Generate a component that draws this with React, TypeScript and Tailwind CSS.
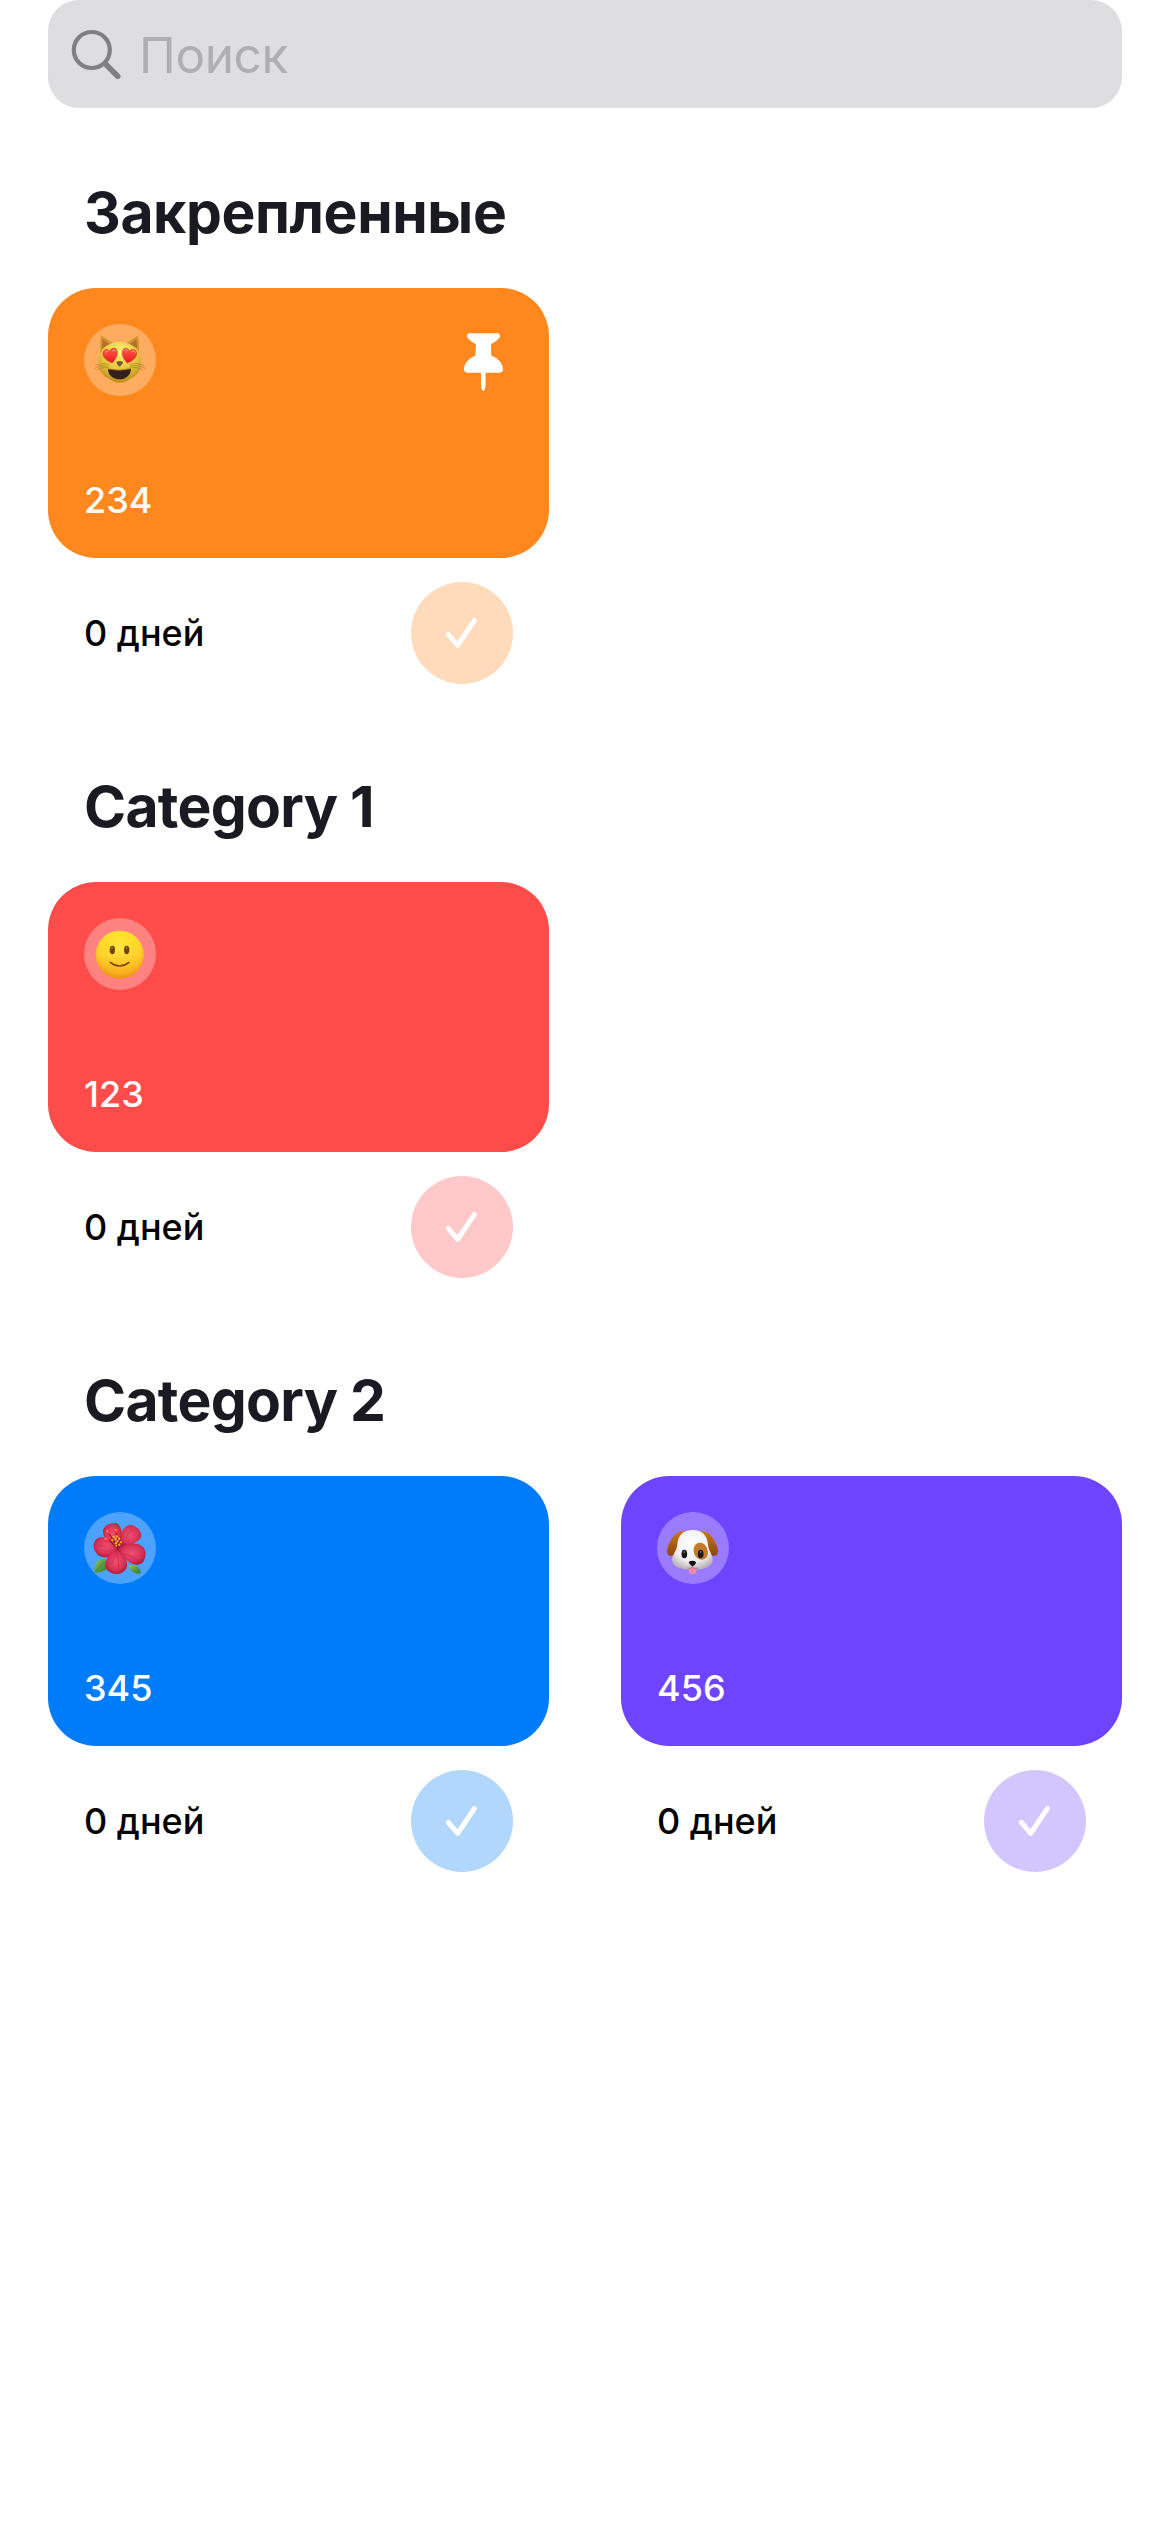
import type { ReactNode } from "react";

function CatEmoji() {
  return (
    <svg viewBox="30 30 216 216" className="size-full">
      <defs>
        <radialGradient id="catFace" cx="0.5" cy="0.25" r="0.8">
          <stop offset="0" stopColor="#fdf27a" />
          <stop offset="0.5" stopColor="#e9c840" />
          <stop offset="1" stopColor="#b88313" />
        </radialGradient>
        <linearGradient id="heart" x1="0" y1="0" x2="0" y2="1">
          <stop offset="0" stopColor="#ff5a4a" />
          <stop offset="1" stopColor="#ee1720" />
        </linearGradient>
      </defs>
      <path d="M80 116 C78 95 79 78 81 67 Q83 64 88 69 L117 88 Z" fill="#cf9330" />
      <path d="M194 116 C196 95 194 78 192 67 Q190 64 186 69 L157 88 Z" fill="#cf9330" />
      <path d="M84 102 L86 76 L107 91 Z M190 102 L187 76 L167 91 Z" fill="#b37028" />
      <path d="M137 84 C175 84 202 110 202 147 C202 176 180 190 160 200 Q137 213 114 200 C94 190 73 176 73 147 C73 110 99 84 137 84Z" fill="url(#catFace)" />
      <g fill="none" stroke="#8b6420" strokeWidth="1.6" opacity="0.75">
        <path d="M106 151 Q84 145 64 154 M104 156 Q80 151 62 163 M105 161 Q84 157 68 168" />
        <path d="M166 151 Q190 145 210 154 M168 156 Q194 151 214 163 M167 161 Q190 157 206 168" />
      </g>
      <path d="M114 147 C101 141 86 132 87 118 C88 106 101 102 107 112 C113 98 129 100 130 113 C131 128 121 140 114 147Z" fill="url(#heart)" stroke="#c92a16" strokeWidth="1.5" />
      <path d="M160 147 C154 140 143 128 145 113 C147 100 162 99 167 112 C173 102 188 106 188 118 C188 133 173 142 160 147Z" fill="url(#heart)" stroke="#c92a16" strokeWidth="1.5" />
      <path d="M94 115 Q96 109 102 111 M115 111 Q120 104 126 110 M150 110 Q156 103 161 110 M174 112 Q180 108 184 115" stroke="#ff9c92" strokeWidth="3" fill="none" strokeLinecap="round" />
      <path d="M127 145 Q137 137 147 144 Q147 152 137 158 Q128 153 127 145Z" fill="#7a5a35" />
      <path d="M102 165 Q136 173 171 164 C171 184 154 196 137 196 C118 196 102 184 102 165Z" fill="#33201c" />
      <path d="M102 165 Q136 173 171 164" stroke="#8b6215" strokeWidth="2" fill="none" />
    </svg>
  );
}

function SmileEmoji() {
  return (
    <svg viewBox="30 30 216 216" className="size-full">
      <defs>
        <linearGradient id="smileFace" x1="0" y1="0" x2="0" y2="1">
          <stop offset="0" stopColor="#ffe22c" />
          <stop offset="0.5" stopColor="#ffd02b" />
          <stop offset="1" stopColor="#f6a31c" />
        </linearGradient>
        <radialGradient id="smileEdge" cx="0.5" cy="0.38" r="0.62">
          <stop offset="0" stopColor="#fff350" stopOpacity="0.55" />
          <stop offset="0.6" stopColor="#ffdb30" stopOpacity="0.15" />
          <stop offset="1" stopColor="#e88a0c" stopOpacity="0.75" />
        </radialGradient>
      </defs>
      <circle cx="137" cy="140" r="72" fill="url(#smileFace)" />
      <circle cx="137" cy="140" r="72" fill="url(#smileEdge)" />
      <ellipse cx="115" cy="126" rx="8" ry="12.5" fill="#70430c" />
      <ellipse cx="158" cy="126" rx="8" ry="12.5" fill="#70430c" />
      <ellipse cx="114" cy="120" rx="3" ry="3" fill="#a97827" />
      <ellipse cx="157" cy="120" rx="3" ry="3" fill="#a97827" />
      <path d="M109 163 Q136 185 165 163" stroke="#7c4508" strokeWidth="4.5" strokeLinecap="round" fill="none" />
    </svg>
  );
}

function FlowerEmoji() {
  return (
    <svg viewBox="30 30 216 216" className="size-full">
      <defs>
        <radialGradient id="petal" cx="0.5" cy="0.45" r="0.62">
          <stop offset="0" stopColor="#ef5070" />
          <stop offset="0.6" stopColor="#d93256" />
          <stop offset="1" stopColor="#a01535" />
        </radialGradient>
        <linearGradient id="leaf" x1="0" y1="0" x2="1" y2="1">
          <stop offset="0" stopColor="#8cc860" />
          <stop offset="1" stopColor="#33742b" />
        </linearGradient>
      </defs>
      <path d="M93 169 C70 168 60 188 61 213 C77 211 95 210 101 196Z" fill="url(#leaf)" />
      <path d="M62 212 L90 178" stroke="#3b7a2c" strokeWidth="2" />
      <path d="M163 190 C177 188 196 184 201 214 C184 217 168 211 163 190Z" fill="url(#leaf)" />
      <path d="M110 110 L150 95 L170 140 L140 165 L108 155Z" fill="#a81c3c" />
      <path d="M134 126 C136 95 150 69 170 69 C182 70 203 84 202 101 C200 118 171 129 137 137Z" fill="url(#petal)" />
      <path d="M130 133 C105 128 86 107 87 85 C91 70 111 60 128 64 C145 72 148 103 134 135Z" fill="url(#petal)" />
      <path d="M132 146 C112 170 78 172 66 152 C51 132 61 110 79 106 C99 102 124 120 132 142Z" fill="url(#petal)" />
      <path d="M132 137 C151 124 188 119 203 132 C219 143 217 166 207 181 C187 199 153 181 132 141Z" fill="url(#petal)" />
      <path d="M130 147 C113 147 96 165 94 188 C94 207 113 216 129 216 C148 215 164 199 158 179 C155 162 144 147 130 147Z" fill="url(#petal)" />
      <path d="M113 188 Q121 166 128 155 M134 195 Q134 169 129 155 M151 155 Q175 163 191 174 M99 135 Q82 128 73 130 M154 109 Q166 91 175 83" stroke="#b31c43" strokeWidth="2" fill="none" opacity="0.6" />
      <path d="M134 143 Q121 132 107 114 M132 139 Q120 113 104 95 M132 137 Q131 109 127 88" stroke="#96182d" strokeWidth="4" fill="none" />
      <g fill="#ec3545">
        <circle cx="102" cy="90" r="8" />
        <circle cx="127" cy="86" r="8" />
        <circle cx="97" cy="112" r="8" />
      </g>
      <g fill="#ff8f93">
        <circle cx="100" cy="88" r="3" />
        <circle cx="125" cy="84" r="3" />
        <circle cx="95" cy="110" r="3" />
      </g>
      <g fill="#ffc414">
        <circle cx="119" cy="105" r="3.4" />
        <circle cx="129" cy="103" r="3.4" />
        <circle cx="115" cy="115" r="3" />
        <circle cx="125" cy="111" r="3.4" />
        <circle cx="135" cy="110" r="3.4" />
        <circle cx="130" cy="118" r="3.4" />
        <circle cx="141" cy="121" r="3" />
        <circle cx="126" cy="124" r="3.4" />
        <circle cx="136" cy="128" r="3.4" />
        <circle cx="127" cy="131" r="3" />
      </g>
    </svg>
  );
}

function DogEmoji() {
  return (
    <svg viewBox="27 30 216 216" className="size-full">
      <defs>
        <radialGradient id="dogFace" cx="0.5" cy="0.35" r="0.68">
          <stop offset="0" stopColor="#ffffff" />
          <stop offset="0.65" stopColor="#f0eff0" />
          <stop offset="1" stopColor="#b6adb5" />
        </radialGradient>
        <linearGradient id="dogEar" x1="0" y1="0" x2="0" y2="1">
          <stop offset="0" stopColor="#c9781c" />
          <stop offset="1" stopColor="#8d4606" />
        </linearGradient>
      </defs>
      <path d="M109 87 C84 87 65 109 57 145 C56 158 64 165 76 160 L100 147Z" fill="url(#dogEar)" />
      <path d="M158 87 C183 87 202 109 210 145 C211 158 203 165 191 160 L166 147Z" fill="url(#dogEar)" />
      <path d="M134 84 C163 84 179 102 180 128 C181 145 195 158 194 174 C193 197 164 203 134 203 C104 203 73 197 72 174 C72 158 87 145 88 128 C89 102 105 84 134 84Z" fill="url(#dogFace)" />
      <path d="M157 122 C171 123 179 137 180 151 C180 168 168 176 155 172 C142 167 136 156 137 142 C138 130 145 122 157 122Z" fill="#c57b25" />
      <ellipse cx="109" cy="156" rx="8.5" ry="13" fill="#191514" />
      <ellipse cx="158" cy="156" rx="8.5" ry="13" fill="#191514" />
      <circle cx="109" cy="150" r="3" fill="#777" />
      <circle cx="158" cy="150" r="3" fill="#777" />
      <path d="M123 199 Q134 194 145 199 V206 Q144 216 134 216 Q123 215 123 206Z" fill="#ff8ba8" />
      <path d="M134 199 V208" stroke="#d95c7e" strokeWidth="2" />
      <path d="M133 190 V196 M118 198 Q128 202 133 195 Q140 202 150 198" stroke="#8a7b80" strokeWidth="2.5" fill="none" />
      <path d="M122 180 Q133 172 144 180 Q144 188 133 193 Q123 188 122 180Z" fill="#171315" />
    </svg>
  );
}

function PinIcon() {
  return (
    <svg viewBox="72 68 117 176" className="h-[58.7px] w-[39px]" fill="#fff">
      <path d="M88 69 H172 Q180 69 180 78 C180 86 164 95 153 102 L154 136 C176 143 189 161 189 177 Q189 187 179 187 H137 V222 Q136 239 130 243 Q124 239 123 222 V187 H82 Q72 187 72 177 C72 161 85 143 106 136 L108 102 C97 95 81 86 81 78 Q81 69 88 69Z" />
    </svg>
  );
}

function SearchIcon() {
  return (
    <svg viewBox="0 0 50 50" className="size-[50px] shrink-0" fill="none" stroke="#808084" strokeLinecap="round">
      <circle cx="20.8" cy="21" r="18" strokeWidth="4.2" />
      <path d="M34 34.5 L46.7 47.2" strokeWidth="5.6" />
    </svg>
  );
}

type Tracker = {
  name: string;
  emoji: ReactNode;
  card: string;
  button: string;
  pinned?: boolean;
};

const sections: { title: string; tracking: string; trackers: Tracker[] }[] = [
  {
    title: "Закрепленные",
    tracking: "tracking-[-0.4px]",
    trackers: [{ name: "234", emoji: <CatEmoji />, card: "bg-[#ff881e]", button: "bg-[#ffdbbb]", pinned: true }],
  },
  {
    title: "Category 1",
    tracking: "tracking-[-0.7px]",
    trackers: [{ name: "123", emoji: <SmileEmoji />, card: "bg-[#fd4c49]", button: "bg-[#fec9c8]" }],
  },
  {
    title: "Category 2",
    tracking: "tracking-[-0.7px]",
    trackers: [
      { name: "345", emoji: <FlowerEmoji />, card: "bg-[#007bfa]", button: "bg-[#b2d7fd]" },
      { name: "456", emoji: <DogEmoji />, card: "bg-[#6e44fe]", button: "bg-[#d3c6ff]" },
    ],
  },
];

function TrackerCell({ tracker }: { tracker: Tracker }) {
  return (
    <article>
      <div className={`flex h-[270px] flex-col justify-between rounded-[48px] px-9 pt-9 pb-[36px] ${tracker.card}`}>
        <div className="flex justify-between">
          <div className="size-[72px] rounded-full bg-white/30">{tracker.emoji}</div>
          {tracker.pinned && (
            <div className="mt-[8.5px] mr-[10px]">
              <PinIcon />
            </div>
          )}
        </div>
        <p className="text-[36px] leading-[44px] font-medium text-white">{tracker.name}</p>
      </div>
      <div className="mt-6 flex h-[102px] items-center justify-between px-9">
        <span className="text-[36px] leading-[44px] font-medium text-black">0 дней</span>
        <button className={`flex size-[102px] items-center justify-center rounded-full ${tracker.button}`}>
          <svg viewBox="0 0 102 102" className="size-full" fill="none" stroke="#fff" strokeWidth="5" strokeLinecap="round" strokeLinejoin="round">
            <path d="M37.3 52.3 L46.7 63.3 L63.3 38.6" />
          </svg>
        </button>
      </div>
    </article>
  );
}

export default function App() {
  return (
    <main className="min-h-[2532px] bg-white px-12 font-['Inter',sans-serif]">
      <div className="flex h-[108px] items-center rounded-[31px] bg-[#dedee0] pl-[23px]">
        <SearchIcon />
        <span className="mt-0.5 ml-[18px] text-[49.5px] leading-[60px] tracking-[-0.4px] text-[#afafb1]">Поиск</span>
      </div>
      {sections.map((section) => (
        <section key={section.title} className="mb-[18px] pt-[70px]">
          <h2 className={`mb-[41px] h-[69px] pl-9 text-[57px] leading-[69px] font-bold text-[#1a1b22] ${section.tracking}`}>
            {section.title}
          </h2>
          <div className="grid grid-cols-2 gap-x-[72px]">
            {section.trackers.map((tracker) => (
              <TrackerCell key={tracker.name} tracker={tracker} />
            ))}
          </div>
        </section>
      ))}
    </main>
  );
}
